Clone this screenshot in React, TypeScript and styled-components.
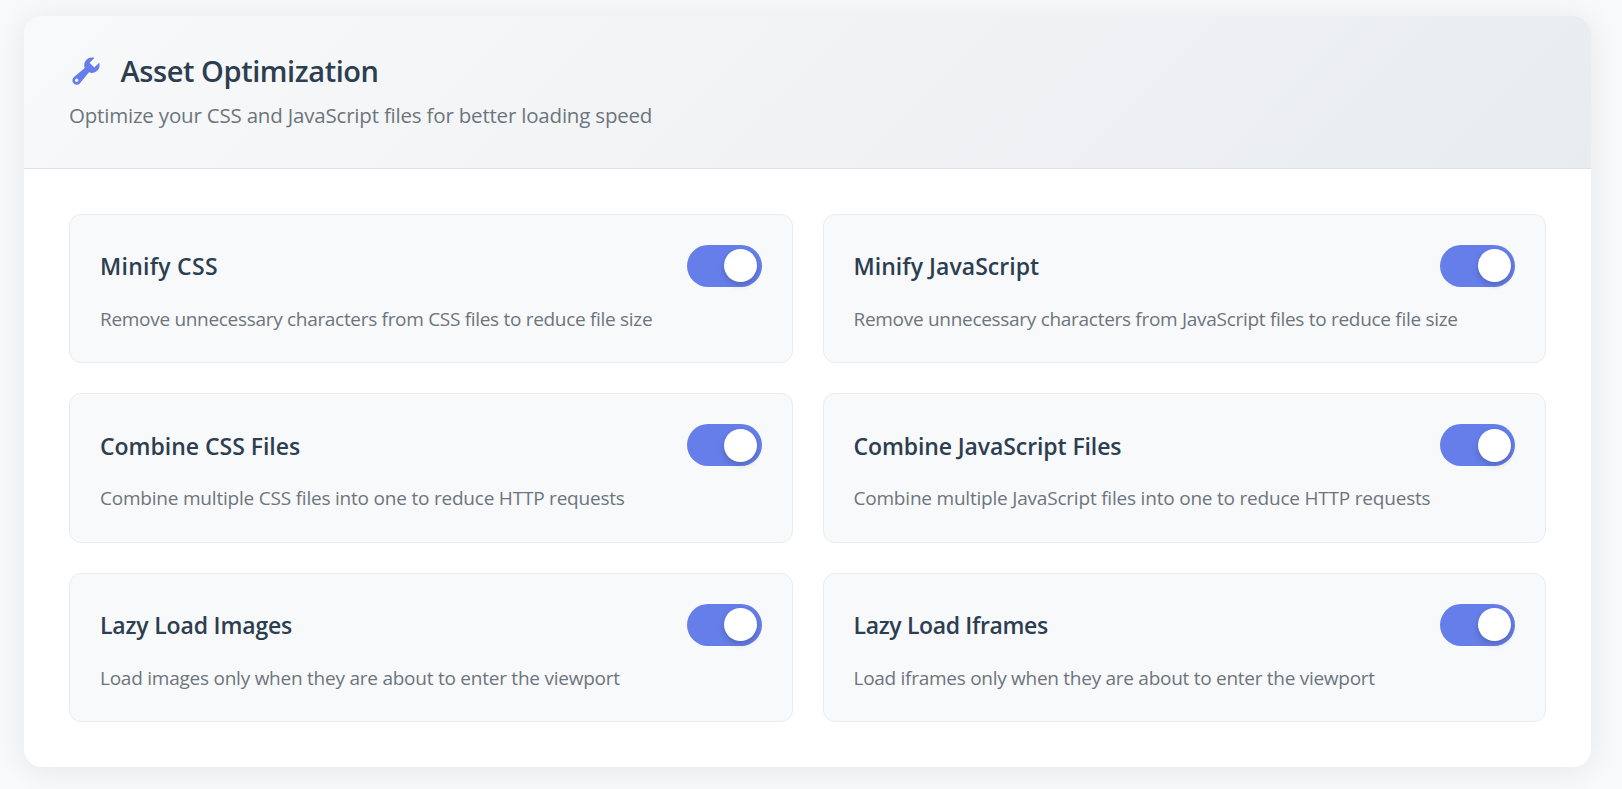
import React, { useState } from "react";
import styled, { createGlobalStyle } from "styled-components";

const GlobalStyle = createGlobalStyle`
  * { box-sizing: border-box; }
  body {
    margin: 0;
    background: #f8f9fb;
    font-family: "Open Sans", "Noto Sans", sans-serif;
  }
`;

const Page = styled.main`
  min-height: 789px;
  padding: 16px 31px 22px 24px;
  overflow: hidden;
`;

const Panel = styled.section`
  background: #ffffff;
  border-radius: 18px;
  box-shadow: 0 3px 30px rgba(0, 0, 0, 0.08);
  overflow: hidden;
`;

const PanelHeader = styled.header`
  height: 153px;
  padding: 36px 45px 0;
  background: linear-gradient(135deg, #f8f9fa 0%, #e9ecef 100%);
  border-bottom: 1px solid #dee2e6;
`;

const TitleRow = styled.div`
  display: flex;
  align-items: center;
  gap: 17.5px;
  height: 38px;
`;

const WrenchIcon = styled.svg`
  width: 34px;
  height: 34px;
  fill: #667eea;
`;

const Title = styled.h2<{ $tracking: number }>`
  margin: 0;
  color: #2c3e50;
  font-size: 29px;
  font-weight: 600;
  line-height: 38px;
  white-space: nowrap;
  letter-spacing: ${(p) => p.$tracking}px;
`;

const Subtitle = styled.p<{ $tracking: number }>`
  margin: 9px 0 0;
  color: #6c757d;
  font-size: 20.5px;
  line-height: 32px;
  white-space: nowrap;
  letter-spacing: ${(p) => p.$tracking}px;
`;

const OptionGrid = styled.div`
  display: grid;
  grid-template-columns: 1fr 1fr;
  gap: 30px;
  padding: 45px;
`;

const OptionCard = styled.article`
  padding: 30px;
  background: #f8f9fb;
  border: 1px solid #e9ecef;
  border-radius: 12px;
`;

const OptionTop = styled.div`
  display: flex;
  align-items: center;
  justify-content: space-between;
  height: 42px;
`;

const OptionName = styled.h3<{ $tracking: number }>`
  margin: 0;
  padding-top: 0.8px;
  color: #2c3e50;
  font-size: 23px;
  font-weight: 600;
  line-height: 42px;
  white-space: nowrap;
  letter-spacing: ${(p) => p.$tracking}px;
`;

const OptionText = styled.p<{ $tracking: number }>`
  margin: 19px 0 0;
  color: #6c757d;
  font-size: 19px;
  line-height: 26.4px;
  white-space: nowrap;
  letter-spacing: ${(p) => p.$tracking}px;
`;

const Switch = styled.button<{ $on: boolean }>`
  display: flex;
  align-items: flex-start;
  justify-content: ${(p) => (p.$on ? "flex-end" : "flex-start")};
  width: 75px;
  height: 42px;
  padding: 4.2px 4.5px;
  border: 0;
  border-radius: 21px;
  background: ${(p) => (p.$on ? "#667eea" : "#cccccc")};
  cursor: pointer;
`;

const Knob = styled.span`
  width: 33px;
  height: 33px;
  border-radius: 50%;
  background: #ffffff;
  box-shadow: 0 3px 6px rgba(0, 0, 0, 0.2);
`;

type Option = {
  name: string;
  nameTracking: number;
  text: string;
  textTracking: number;
};

const options: Option[] = [
  {
    name: "Minify CSS",
    nameTracking: 0.27,
    text: "Remove unnecessary characters from CSS files to reduce file size",
    textTracking: -0.305,
  },
  {
    name: "Minify JavaScript",
    nameTracking: 0.05,
    text: "Remove unnecessary characters from JavaScript files to reduce file size",
    textTracking: -0.295,
  },
  {
    name: "Combine CSS Files",
    nameTracking: -0.02,
    text: "Combine multiple CSS files into one to reduce HTTP requests",
    textTracking: -0.21,
  },
  {
    name: "Combine JavaScript Files",
    nameTracking: -0.1,
    text: "Combine multiple JavaScript files into one to reduce HTTP requests",
    textTracking: -0.205,
  },
  {
    name: "Lazy Load Images",
    nameTracking: -0.17,
    text: "Load images only when they are about to enter the viewport",
    textTracking: -0.24,
  },
  {
    name: "Lazy Load Iframes",
    nameTracking: -0.35,
    text: "Load iframes only when they are about to enter the viewport",
    textTracking: -0.275,
  },
];

function OptionItem({ option }: { option: Option }) {
  const [on, setOn] = useState(true);
  return (
    <OptionCard>
      <OptionTop>
        <OptionName $tracking={option.nameTracking}>{option.name}</OptionName>
        <Switch
          $on={on}
          role="switch"
          aria-checked={on}
          aria-label={option.name}
          onClick={() => setOn(!on)}
        >
          <Knob />
        </Switch>
      </OptionTop>
      <OptionText $tracking={option.textTracking}>{option.text}</OptionText>
    </OptionCard>
  );
}

export default function App() {
  return (
    <Page>
      <GlobalStyle />
      <Panel>
        <PanelHeader>
          <TitleRow>
            <WrenchIcon viewBox="0 0 20 20" aria-hidden="true">
              <path d="M16.68 9.77c-1.34 1.34-3.3 1.67-4.95.99l-5.41 6.52c-.99.99-2.59.99-3.58 0s-.99-2.59 0-3.57l6.52-5.42c-.68-1.65-.35-3.61.99-4.95 1.28-1.28 3.12-1.62 4.72-1.06l-2.89 2.89 2.82 2.82 2.86-2.87c.53 1.58.18 3.39-1.08 4.65zM3.81 16.21c.4.39 1.04.39 1.43 0 .4-.4.4-1.04 0-1.43-.39-.4-1.03-.4-1.43 0-.39.39-.39 1.03 0 1.43z" />
            </WrenchIcon>
            <Title $tracking={-0.42}>Asset Optimization</Title>
          </TitleRow>
          <Subtitle $tracking={-0.195}>
            Optimize your CSS and JavaScript files for better loading speed
          </Subtitle>
        </PanelHeader>
        <OptionGrid>
          {options.map((option) => (
            <OptionItem key={option.name} option={option} />
          ))}
        </OptionGrid>
      </Panel>
    </Page>
  );
}
